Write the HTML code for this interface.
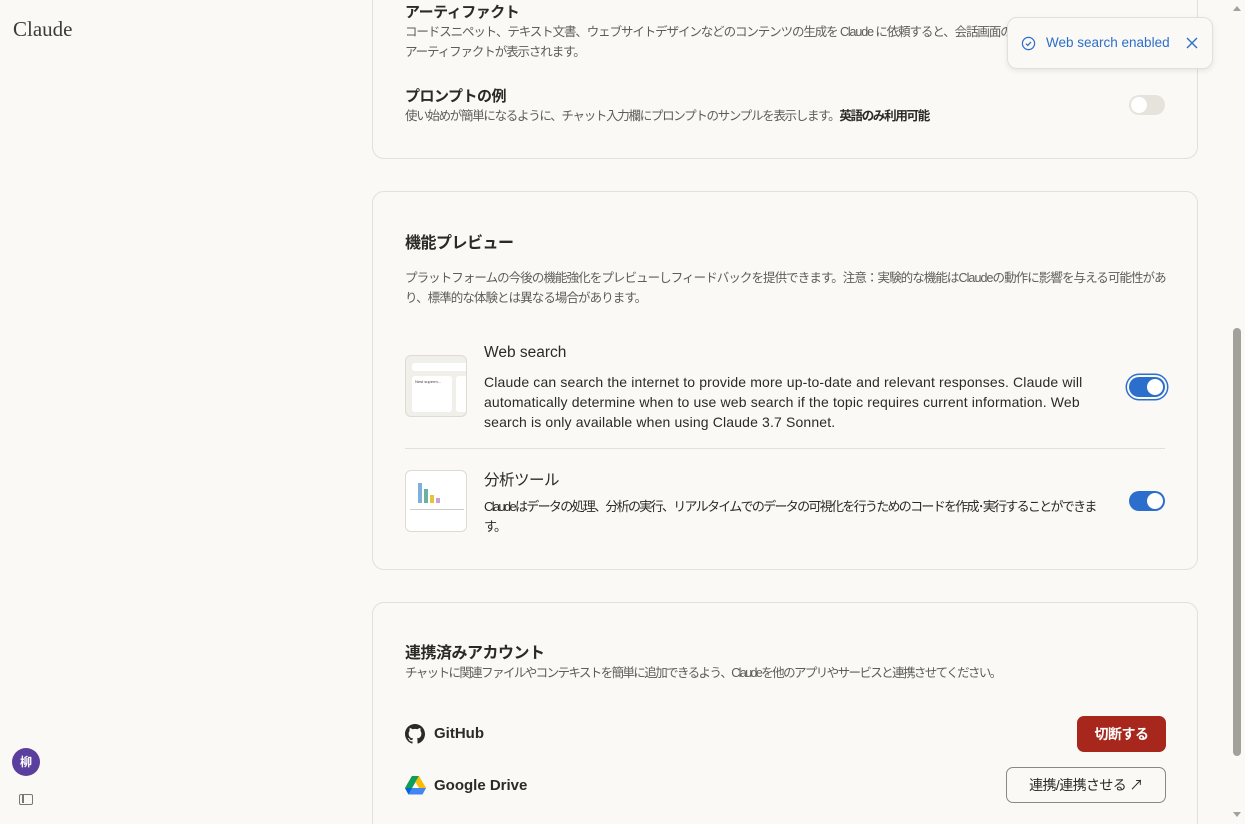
<!DOCTYPE html>
<html><head><meta charset="utf-8"><style>
*{box-sizing:border-box;margin:0;padding:0}
html,body{width:1245px;height:824px;overflow:hidden}
body{background:#faf9f5;font-family:"Liberation Sans","Noto Sans CJK JP",sans-serif;color:#2b2a27;position:relative}
.abs{position:absolute}
.card{position:absolute;left:372px;width:826px;border:1px solid #e3e0d8;border-radius:12px;background:#faf9f5}
.t{font-size:15px;font-weight:bold;color:#2b2a27;letter-spacing:-0.5px}
.d{font-size:12.5px;color:#5e5d59;line-height:20px;letter-spacing:-0.6px;white-space:nowrap}
.tog{position:absolute;width:36px;height:20px;border-radius:10px}
.tog i{position:absolute;top:2px;width:16px;height:16px;border-radius:50%;background:#fff}
</style></head><body>
<div class="abs" style="left:13px;top:17px;font-family:'Liberation Serif',serif;font-size:21px;color:#3d3c38">Claude</div>
<div class="abs" style="left:12px;top:748px;width:28px;height:28px;border-radius:50%;background:#5a3f9e;color:#fff;font-size:12px;font-weight:bold;text-align:center;line-height:28px">柳</div>
<div class="abs" style="left:19px;top:794px;width:14px;height:11px;border:1.5px solid #777;border-radius:2px"><div style="position:absolute;left:2px;top:0;width:1.5px;height:8px;background:#777"></div></div>

<div class="card" style="top:-40px;height:199px">
<div class="abs t" style="left:32px;top:40px">アーティファクト</div>
<div class="abs d" style="left:32px;top:61px;letter-spacing:-1.1px">コードスニペット、テキスト文書、ウェブサイトデザインなどのコンテンツの生成を Claude に依頼すると、会話画面の横に<br>アーティファクトが表示されます。</div>
<div class="abs t" style="left:32px;top:124px">プロンプトの例</div>
<div class="abs d" style="left:32px;top:145px;letter-spacing:-1.3px">使い始めが簡単になるように、チャット入力欄にプロンプトのサンプルを表示します。<b style="color:#2b2a27">英語のみ利用可能</b></div>
<div class="tog" style="left:756px;top:134px;background:#e6e3dc"><i style="left:2px"></i></div>
</div>

<div class="abs" style="left:1007px;top:17px;width:206px;height:52px;background:#faf9f5;border:1px solid #e3e0d8;border-radius:10px;box-shadow:0 2px 6px rgba(0,0,0,.08)">
<svg class="abs" style="left:13px;top:18px" width="15" height="15" viewBox="0 0 16 16"><circle cx="8" cy="8" r="6.5" fill="none" stroke="#2c6ecb" stroke-width="1.3"/><path d="M5.3 8.2l1.9 1.9 3.5-3.8" fill="none" stroke="#2c6ecb" stroke-width="1.3"/></svg>
<div class="abs" style="left:38px;top:17px;font-size:13.5px;color:#2c6ecb">Web search enabled</div>
<svg class="abs" style="left:178px;top:19px" width="12" height="12" viewBox="0 0 12 12"><path d="M1 1l10 10M11 1L1 11" stroke="#2c6ecb" stroke-width="1.4"/></svg>
</div>

<div class="card" style="top:191px;height:379px">
<div class="abs t" style="left:32px;top:37px;font-size:16px">機能プレビュー</div>
<div class="abs d" style="left:32px;top:76px;letter-spacing:-0.93px">プラットフォームの今後の機能強化をプレビューしフィードバックを提供できます。注意：実験的な機能はClaudeの動作に影響を与える可能性があ<br>り、標準的な体験とは異なる場合があります。</div>
<div class="abs" style="left:32px;top:163px;width:62px;height:62px;border:1px solid #dedbd3;border-radius:6px;background:#f1efe9;overflow:hidden">
<div style="position:absolute;left:6px;top:7px;width:56px;height:8px;border-radius:3px;background:#fff"></div>
<div style="position:absolute;left:6px;top:20px;width:40px;height:36px;border-radius:3px;background:#fff;font-size:4px;padding:3px;line-height:5px;color:#444">Nest superm...</div>
<div style="position:absolute;left:50px;top:20px;width:14px;height:36px;border-radius:3px;background:#fff"></div></div>
<div class="abs" style="left:111px;top:152px;font-size:15.5px;color:#2b2a27">Web search</div>
<div class="abs" style="left:111px;top:180px;font-size:14px;line-height:20px;color:#2b2a27;white-space:nowrap;letter-spacing:0.15px">Claude can search the internet to provide more up-to-date and relevant responses. Claude will<br>automatically determine when to use web search if the topic requires current information. Web<br>search is only available when using Claude 3.7 Sonnet.</div>
<div class="tog" style="left:756px;top:185px;background:#2c6ecb;box-shadow:0 0 0 2px #faf9f5,0 0 0 3.5px #2c6ecb"><i style="left:18px"></i></div>
<div class="abs" style="left:32px;top:256px;width:760px;height:1px;background:#e3e0d8"></div>
<div class="abs" style="left:32px;top:278px;width:62px;height:62px;border:1px solid #dedbd3;border-radius:6px;background:#fff;overflow:hidden">
<div style="position:absolute;left:12px;top:12px;width:4px;height:20px;background:#7fb0d8"></div>
<div style="position:absolute;left:18px;top:18px;width:4px;height:14px;background:#6cb0a0"></div>
<div style="position:absolute;left:24px;top:24px;width:4px;height:8px;background:#e8c23a"></div>
<div style="position:absolute;left:30px;top:27px;width:4px;height:5px;background:#c9a0d8"></div>
<div style="position:absolute;left:4px;top:38px;width:54px;height:1px;background:#ccc"></div></div>
<div class="abs" style="left:111px;top:276px;font-size:15.5px;color:#2b2a27;letter-spacing:-0.5px">分析ツール</div>
<div class="abs" style="left:111px;top:305px;font-size:13px;line-height:20px;color:#2b2a27;white-space:nowrap;letter-spacing:-1.7px">Claudeはデータの処理、分析の実行、リアルタイムでのデータの可視化を行うためのコードを作成･実行することができま<br>す。</div>
<div class="tog" style="left:756px;top:299px;background:#2c6ecb"><i style="left:18px"></i></div>
</div>

<div class="card" style="top:602px;height:260px">
<div class="abs t" style="left:32px;top:36px;font-size:16px">連携済みアカウント</div>
<div class="abs d" style="left:32px;top:60px;letter-spacing:-1.6px">チャットに関連ファイルやコンテキストを簡単に追加できるよう、Claudeを他のアプリやサービスと連携させてください。</div>
<svg class="abs" style="left:32px;top:121px" width="20" height="20" viewBox="0 0 16 16"><path fill="#2b2a27" d="M8 0C3.58 0 0 3.580 0 8c0 3.54 2.29 6.53 5.47 7.590.4.07.55-.17.55-.38v-1.34c-2.23.48-2.7-1.070-2.7-1.070-.36-.92-.89-1.170-.89-1.170-.73-.5.06-.49.06-.49.8.06 1.23.83 1.23.83.71 1.22 1.87.87 2.33.66.07-.52.28-.87.51-1.070-1.78-.2-3.64-.89-3.64-3.95 0-.87.31-1.59.82-2.15-.08-.2-.36-1.020.08-2.12 0 0 .67-.21 2.2.82a7.6 7.6 0 014 0c1.53-1.04 2.2-.82 2.2-.82.44 1.1.16 1.92.08 2.120.51.56.82 1.27.82 2.15 0 3.07-1.87 3.75-3.65 3.950.29.25.54.73.54 1.48v2.2c0 .21.15.46.55.38A8.01 8.01 0 0016 8c0-4.42-3.58-8-8-8z"/></svg>
<div class="abs" style="left:61px;top:122px;font-size:15px;font-weight:bold;color:#2b2a27">GitHub</div>
<div class="abs" style="left:704px;top:113px;width:89px;height:36px;border-radius:7px;background:#a8271d;color:#fff;font-size:14px;font-weight:bold;text-align:center;line-height:36px;letter-spacing:-0.5px">切断する</div>
<svg class="abs" style="left:32px;top:173px" width="21" height="19" viewBox="0 0 21 19"><path d="M7 0h7l-5 8.5H2z" fill="#0f9d58"/><path d="M14 0l7 12-3.5 6L10.5 6z" fill="#fbbc04"/><path d="M0 12l3.5 6.5L10.5 6 7 0z" fill="#0f9d58"/><path d="M3.5 18.5H17.5L21 12H7z" fill="#4285f4"/><path d="M0 12h7l-3.5 6.5z" fill="#0066da"/></svg>
<div class="abs" style="left:61px;top:174px;font-size:15px;font-weight:bold;color:#2b2a27">Google Drive</div>
<div class="abs" style="left:633px;top:164px;width:160px;height:36px;border-radius:7px;border:1px solid #8a8880;color:#2b2a27;font-size:14px;text-align:center;line-height:34px;letter-spacing:-0.6px">連携/連携させる ↗</div>
</div>

<div class="abs" style="left:1233px;top:328px;width:8px;height:428px;border-radius:4px;background:#a3a19b"></div>
<div class="abs" style="left:1233px;top:6px;width:0;height:0;border-left:4px solid transparent;border-right:4px solid transparent;border-bottom:5px solid #a3a19b"></div>
<div class="abs" style="left:1233px;top:812px;width:0;height:0;border-left:4px solid transparent;border-right:4px solid transparent;border-top:5px solid #a3a19b"></div>
</body></html>
